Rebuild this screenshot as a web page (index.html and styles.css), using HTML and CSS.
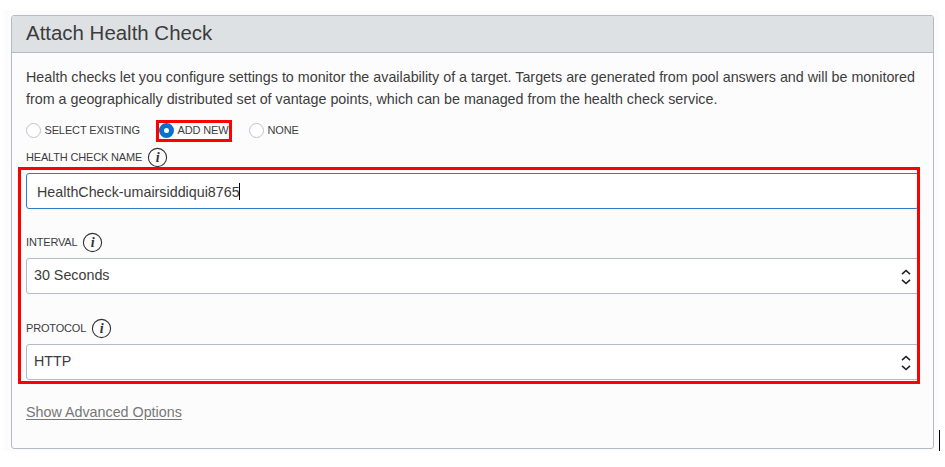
FILE: index.html
```html
<!DOCTYPE html>
<html lang="en">
<head>
<meta charset="utf-8">
<title>Attach Health Check</title>
<link rel="stylesheet" href="styles.css">
</head>
<body>
<main class="page">
  <section class="panel">
    <header class="panel-header"><h1>Attach Health Check</h1></header>
    <div class="panel-body">
      <p class="intro"><span class="line-one">Health checks let you configure settings to monitor the availability of a target. Targets are generated from pool answers and will be monitored</span><br><span class="line-two">from a geographically distributed set of vantage points, which can be managed from the health check service.</span></p>
      <div class="options">
        <div class="option existing"><i class="radio"></i><span>SELECT EXISTING</span></div>
        <div class="option selected"><i class="radio checked"></i><span>ADD NEW</span><div class="mark mark-option"></div></div>
        <div class="option"><i class="radio"></i><span>NONE</span></div>
      </div>
      <div class="fields">
        <div class="field">
          <div class="label"><span>HEALTH CHECK NAME</span><svg class="info" viewBox="0 0 20 20"><circle cx="10.5" cy="10.5" r="9.1"/><text x="10.5" y="14.8">i</text></svg></div>
          <div class="control active"><span>HealthCheck-umairsiddiqui8765</span><i class="caret"></i></div>
        </div>
        <div class="field last-gap">
          <div class="label"><span>INTERVAL</span><svg class="info" viewBox="0 0 20 20"><circle cx="10.5" cy="10.5" r="9.1"/><text x="10.5" y="14.8">i</text></svg></div>
          <div class="control"><span>30 Seconds</span><svg class="arrows" viewBox="0 0 10 16"><path d="M1 5.2 5 1.5l4 3.7M1 10.8 5 14.5l4-3.7"/></svg></div>
        </div>
        <div class="field">
          <div class="label"><span>PROTOCOL</span><svg class="info" viewBox="0 0 20 20"><circle cx="10.5" cy="10.5" r="9.1"/><text x="10.5" y="14.8">i</text></svg></div>
          <div class="control"><span>HTTP</span><svg class="arrows" viewBox="0 0 10 16"><path d="M1 5.2 5 1.5l4 3.7M1 10.8 5 14.5l4-3.7"/></svg></div>
        </div>
        <div class="mark mark-fields"></div>
      </div>
      <a class="advanced">Show Advanced Options</a>
    </div>
  </section>
  <i class="edge-caret"></i>
</main>
</body>
</html>
```
FILE: styles.css
```css
* { box-sizing: border-box; }
body { margin: 0; background: #fff; color: #3c3c3c; font: 14.3px "Liberation Sans", Arial, sans-serif; }
.page { position: relative; width: 936px; height: 441px; margin: 10px 0 0 3px; padding: 5px 5px 2px 8px; background: #fcfcfc; }
.panel { width: 923px; height: 434px; border: 1px solid #b4bac5; border-radius: 3px; background: #fcfcfc; }
.panel-header { height: 37px; border-bottom: 1px solid #b4bac5; background: #dee1e4; padding-left: 14px; border-radius: 2px 2px 0 0; }
h1 { margin: 0; font-size: 20.45px; font-weight: 400; line-height: 34px; }
.panel-body { padding: 14px 14px 0; }
.intro { margin: 0; line-height: 21.5px; white-space: nowrap; height: 43px; }
.options { display: flex; height: 20px; margin-top: 10px; font-size: 11px; letter-spacing: -.1px; }
.option { position: relative; display: flex; align-items: center; gap: 3.4px; height: 20px; white-space: nowrap; }
.option.existing { width: 133px; }
.option.selected { width: 90px; }
.radio { width: 15px; height: 15px; flex: none; border: 1px solid #bfc3ce; border-radius: 50%; background: #fff; }
.radio.checked { border: 5px solid #0572ce; }
.mark { position: absolute; border: 3px solid #fd0000; pointer-events: none; }
.mark-option { left: -3px; top: 0; width: 76px; height: 22px; }
.fields { position: relative; padding-top: 7px; }
.mark-fields { left: -8px; top: 27px; width: 902px; height: 217px; }
.field { height: 85px; }
.field.last-gap { height: 86px; }
.label { display: flex; align-items: center; height: 20px; gap: 5px; font-size: 11px; letter-spacing: -.17px; }
.info { width: 20px; height: 20px; flex: none; overflow: visible; }
.info circle { fill: none; stroke: #333; stroke-width: 1.1; }
.info text { fill: #333; font: italic bold 14px "Liberation Serif", serif; text-anchor: middle; }
.control { display: flex; align-items: center; width: 893px; height: 36px; margin-top: 6px; padding: 0 7px 2px 7px; border: 1px solid #b4bac5; border-radius: 3px; background: #fff; }
.control.active { border-color: #2b7ec8; padding-left: 10px; padding-top: 1px; padding-bottom: 0; }
.caret { width: 1px; height: 17px; background: #000; margin-left: -1px; }
.arrows { width: 10px; height: 16px; margin: 3px 0 0 auto; fill: none; stroke: #222; stroke-width: 1.6; }
.advanced { display: block; margin-top: 1px; line-height: 16px; color: #777; text-decoration: underline; text-underline-offset: 2px; }
.edge-caret { position: absolute; left: 936px; top: 420px; width: 1px; height: 21px; background: #000; }
```
